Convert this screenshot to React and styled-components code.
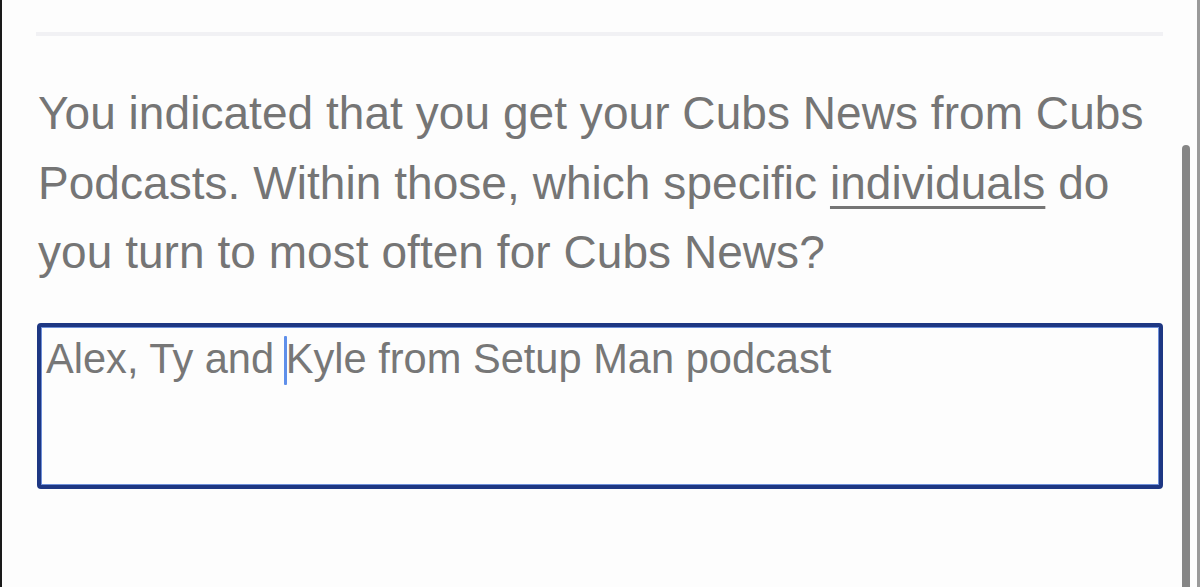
import React from 'react';
import styled, { createGlobalStyle } from 'styled-components';

const GlobalStyle = createGlobalStyle`
  html, body {
    margin: 0;
    padding: 0;
    background: #fdfdfd;
  }
  body {
    font-family: "Liberation Sans", Arial, sans-serif;
  }
`;

const Frame = styled.div`
  display: flex;
  width: 1200px;
  height: 587px;
  box-sizing: border-box;
  border-left: 2px solid #1a1a1a;
  border-right: 3px solid #9a9a9a;
  background: #fdfdfd;
  overflow: hidden;
`;

const Main = styled.div`
  width: 1180px;
  box-sizing: border-box;
  padding: 32px 19px 0 34px;
`;

const Divider = styled.hr`
  margin: 0;
  border: none;
  height: 4px;
  background: #f1f1f4;
`;

const Question = styled.p`
  margin: 43px 0 0 2px;
  font-size: 46px;
  line-height: 69.5px;
  color: #757575;
  letter-spacing: 0.05px;
`;

const Underlined = styled.span`
  text-decoration: underline;
  text-decoration-thickness: 3px;
  text-underline-offset: 7px;
`;

const AnswerBox = styled.div`
  margin-top: 35px;
  margin-left: 1px;
  height: 166px;
  box-sizing: border-box;
  border: 4px solid #1e3783;
  border-radius: 4px;
  box-shadow: inset 0 0 0 1px #6e8fd8;
  padding: 6px 0 0 5px;
  font-size: 41.6px;
  line-height: 52px;
  color: #777777;
`;

const Caret = styled.span`
  display: inline-block;
  width: 3px;
  height: 49px;
  margin: 0 -1px 0 -2px;
  vertical-align: -12px;
  background: #5f8fea;
  border-radius: 1px;
`;

const Track = styled.div`
  flex: 1;
  padding-top: 145px;
  display: flex;
  justify-content: flex-start;
`;

const Thumb = styled.div`
  width: 8px;
  height: 460px;
  border-radius: 4px 4px 0 0;
  background: #868686;
`;

export default function App() {
  return (
    <>
      <GlobalStyle />
      <Frame>
        <Main>
          <Divider />
          <Question>
            You indicated that you get your Cubs News from Cubs Podcasts. Within those, which specific{' '}
            <Underlined>individuals</Underlined> do you turn to most often for Cubs News?
          </Question>
          <AnswerBox>
            Alex, Ty and <Caret />Kyle from Setup Man podcast
          </AnswerBox>
        </Main>
        <Track>
          <Thumb />
        </Track>
      </Frame>
    </>
  );
}
